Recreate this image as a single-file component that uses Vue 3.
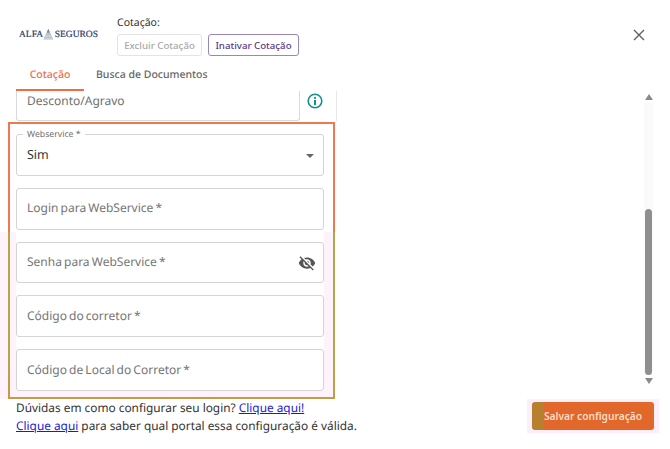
<script setup>
const fields = [
  { label: 'Login para WebService' },
  { label: 'Senha para WebService', eye: true },
  { label: 'Código do corretor' },
  { label: 'Código de Local do Corretor' }
]
</script>

<template>
  <div class="page">
    <header class="header">
      <div class="logo">
        <span>ALFA</span>
        <svg width="14" height="15" viewBox="0 0 14 15">
          <path d="M7 0 L13.5 14 H0.5 Z" fill="#b4bdce" />
          <path d="M7 0 L9 5 H5 Z" fill="#7d8aa3" />
          <path d="M3 8.5 H11 M3 10.5 H11 M2 12.5 H12" stroke="#e8ebf1" stroke-width="0.7" />
        </svg>
        <span>SEGUROS</span>
      </div>
      <div class="quote">
        <div class="quote-title">Cotação:</div>
        <div class="quote-actions">
          <button class="btn disabled">Excluir Cotação</button>
          <button class="btn outline">Inativar Cotação</button>
        </div>
      </div>
      <button class="close" aria-label="Fechar">
        <svg width="12" height="12" viewBox="0 0 12 12">
          <path d="M1 1 L11 11 M11 1 L1 11" stroke="#5f5f5f" stroke-width="1.4" fill="none" />
        </svg>
      </button>
    </header>

    <nav class="tabs">
      <span class="tab active">Cotação</span>
      <span class="tab">Busca de Documentos</span>
    </nav>

    <main class="main">
      <div class="scroll">
        <div class="discount">
          <div class="discount-input">Desconto/Agravo</div>
          <div class="discount-info">
            <svg width="16" height="16" viewBox="0 0 16 16">
              <circle cx="8" cy="8" r="6.8" fill="none" stroke="#12908f" stroke-width="1.6" />
              <circle cx="8" cy="4.9" r="1.05" fill="#12908f" />
              <rect x="7" y="7" width="2" height="5" fill="#12908f" />
            </svg>
          </div>
        </div>
        <div class="box-row">
          <section class="box">
            <div class="stack">
              <div class="field select">
                <span class="legend">Webservice *</span>
                <span class="value">Sim</span>
                <span class="caret"></span>
              </div>
              <div v-for="f in fields" :key="f.label" class="field">
                <span class="placeholder">{{ f.label }} *</span>
                <svg v-if="f.eye" class="eye" width="18" height="18" viewBox="0 0 24 24">
                  <path fill="#555" d="M12 7c2.76 0 5 2.24 5 5 0 .65-.13 1.26-.36 1.83l2.92 2.92c1.51-1.26 2.7-2.89 3.43-4.75-1.73-4.39-6-7.5-11-7.5-1.4 0-2.74.25-3.98.7l2.16 2.16C10.74 7.13 11.35 7 12 7zM2 4.27l2.28 2.28.46.46C3.08 8.3 1.78 10.02 1 12c1.73 4.39 6 7.5 11 7.5 1.55 0 3.03-.3 4.38-.84l.42.42L19.73 22 21 20.73 3.27 3 2 4.27zM7.53 9.8l1.55 1.55c-.05.21-.08.43-.08.65 0 1.66 1.34 3 3 3 .22 0 .44-.03.65-.08l1.55 1.55c-.67.33-1.41.53-2.2.53-2.76 0-5-2.24-5-5 0-.79.2-1.53.53-2.2zm4.31-.78l3.15 3.15.02-.16c0-1.66-1.34-3-3-3l-.17.01z" />
                </svg>
              </div>
            </div>
          </section>
        </div>
      </div>
      <div class="scrollbar">
        <span class="arrow up"></span>
        <div class="track"><div class="thumb"></div></div>
        <span class="arrow down"></span>
      </div>
    </main>

    <footer class="footer">
      <div class="help">
        <div>Dúvidas em como configurar seu login? <a href="#">Clique aqui!</a></div>
        <div><a href="#">Clique aqui</a> para saber qual portal essa configuração é válida.</div>
      </div>
      <div class="save-glow">
        <button class="save">Salvar configuração</button>
      </div>
    </footer>
  </div>
</template>

<style scoped>
.page {
  width: 670px;
  height: 449px;
  overflow: hidden;
  background: #fff;
  font-family: "Noto Sans", "Open Sans", sans-serif;
  text-rendering: geometricPrecision;
  color: #333;
  display: flex;
  flex-direction: column;
}
.header {
  height: 65px;
  flex: none;
  display: flex;
  align-items: flex-start;
  padding: 15px 25px 0 19px;
  box-sizing: border-box;
}
.logo {
  width: 79px;
  margin-top: 12px;
  margin-right: 19px;
  display: flex;
  align-items: flex-end;
  justify-content: space-between;
  font-family: "Liberation Serif", serif;
  font-size: 9.5px;
  line-height: 14px;
  font-weight: 400;
  -webkit-text-stroke: 0.2px #233a6b;
  color: #233a6b;
}
.logo svg {
  margin: 0 1px 0 0;
}
.quote-title {
  font-size: 10.5px;
  line-height: 16px;
  color: #333;
}
.quote-actions {
  display: flex;
  gap: 6px;
  margin-top: 3px;
}
.btn {
  height: 22px;
  padding: 0;
  box-sizing: border-box;
  border-radius: 3px;
  background: #fff;
  font-family: inherit;
  font-size: 9.7px;
  font-weight: 500;
}
.btn.disabled {
  width: 85px;
  color: #a9a9a9;
  border: 1px solid #e3e3e3;
}
.btn.outline {
  width: 91px;
  color: #5a3a8c;
  border: 1px solid #9a86bf;
}
.close {
  margin-left: auto;
  margin-top: 14px;
  padding: 0;
  border: 0;
  background: none;
  display: flex;
}
.tabs {
  height: 26px;
  flex: none;
  display: flex;
  padding-left: 16px;
  box-sizing: border-box;
}
.tab {
  font-size: 10.5px;
  line-height: 20px;
  color: #666;
  padding: 0 12px;
  font-weight: 500;
}
.tab.active {
  width: 68px;
  box-sizing: border-box;
  text-align: center;
  padding: 0;
  color: #ef6c45;
  border-bottom: 2px solid #ef6c45;
}
.main {
  height: 308px;
  flex: none;
  display: flex;
}
.scroll {
  width: 336px;
  flex: none;
}
.discount {
  height: 30px;
  margin-left: 16px;
  width: 321px;
  display: flex;
  box-sizing: border-box;
  border-right: 1px solid #e6e6e6;
}
.discount-input {
  width: 284px;
  box-sizing: border-box;
  padding-left: 10px;
  font-size: 12px;
  line-height: 19px;
  color: #6f6f6f;
  border: 1px solid #d9d9d9;
  border-top: 0;
  border-radius: 0 0 3px 3px;
  height: 30px;
}
.discount-info {
  flex: 1;
  display: flex;
  justify-content: center;
  padding: 2px 7px 0 0;
  height: 17px;
}
.box-row {
  margin-top: 1px;
  padding-left: 8px;
  background: linear-gradient(#fff 0 110px, #fff3fb 110px) no-repeat left top / 8px 100%;
  height: 277px;
}
.box {
  width: 327px;
  height: 277px;
  box-sizing: border-box;
  border: 2px solid;
  border-image: linear-gradient(#f0784f 0 110px, #b3a64f 110px 240px, #c49b48 260px) 2;
  padding: 10px 9px 0 6px;
  background: linear-gradient(#fff 0 108px, #fff3fb 108px);
}
.stack {
  display: flex;
  flex-direction: column;
  gap: 12px;
  background: #fff;
  height: 257px;
}
.field {
  position: relative;
  height: 42px;
  box-sizing: border-box;
  border: 1px solid #d4d4d4;
  border-radius: 3px;
  display: flex;
  align-items: center;
  padding: 0 10px;
  background: #fff;
}
.placeholder {
  font-size: 12px;
  color: #757575;
  word-spacing: -1px;
  position: relative;
  top: -1px;
}
.value {
  font-size: 12.5px;
  color: #333;
}
.legend {
  position: absolute;
  left: 6px;
  top: -6px;
  padding: 0 4px;
  background: #fff;
  font-size: 8.7px;
  line-height: 11px;
  color: #707070;
}
.caret {
  position: absolute;
  right: 9px;
  top: 19px;
  width: 0;
  height: 0;
  border-left: 4px solid transparent;
  border-right: 4px solid transparent;
  border-top: 4px solid #666;
}
.eye {
  position: absolute;
  right: 7px;
  top: 11px;
}
.scrollbar {
  margin-left: 308px;
  width: 9px;
  margin-top: 3px;
  height: 290px;
  flex: none;
  display: flex;
  flex-direction: column;
  align-items: center;
}
.arrow {
  width: 0;
  height: 0;
  flex: none;
  border-left: 4px solid transparent;
  border-right: 4px solid transparent;
}
.arrow.up {
  border-bottom: 6px solid #8a8a8a;
}
.arrow.down {
  border-top: 6px solid #8a8a8a;
}
.track {
  flex: 1;
  width: 9px;
  margin: 3px 0;
  background: linear-gradient(#fafafa, #fafafa);
  display: flex;
  flex-direction: column;
  justify-content: flex-end;
}
.thumb {
  height: 166px;
  width: 7px;
  margin: 0 1px;
  border-radius: 4px;
  background: #8f8f8f;
}
.footer {
  flex: 1;
  display: flex;
  align-items: flex-start;
  padding-left: 16px;
}
.help {
  font-size: 11.85px;
  line-height: 18px;
  color: #333;
}
.help a {
  color: #1a1ad6;
}
.save-glow {
  margin-left: auto;
  margin-right: 11px;
  padding: 3px 5px;
  background: #fdeefc;
}
.save {
  display: block;
  width: 122px;
  height: 28px;
  padding: 0;
  border: 0;
  border-radius: 3px;
  background: linear-gradient(90deg, #b87f2e 0 12px, #e2672a 12px);
  color: #ffdcc8;
  font-family: inherit;
  font-size: 10.2px;
  font-weight: 600;
}
</style>
